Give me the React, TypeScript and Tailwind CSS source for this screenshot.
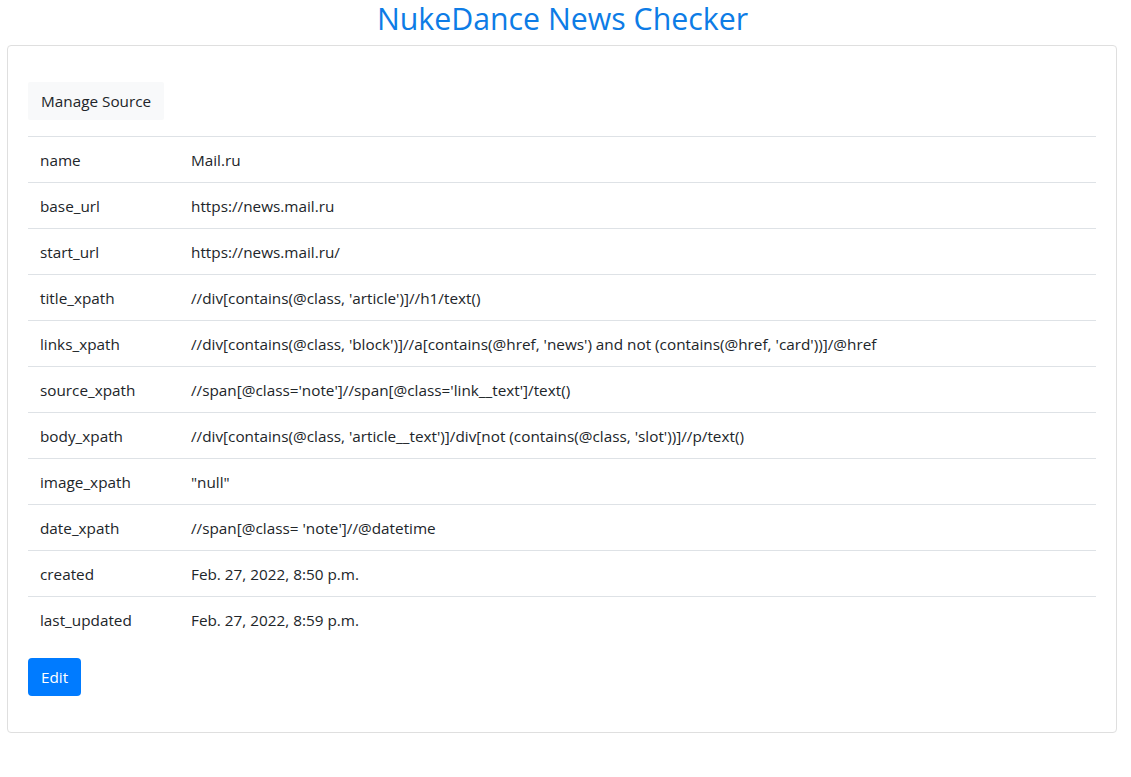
import React from 'react';

type Field = { key: string; value: string };

const fields: Field[] = [
  { key: 'name', value: 'Mail.ru' },
  { key: 'base_url', value: 'https://news.mail.ru' },
  { key: 'start_url', value: 'https://news.mail.ru/' },
  { key: 'title_xpath', value: "//div[contains(@class, 'article')]//h1/text()" },
  { key: 'links_xpath', value: "//div[contains(@class, 'block')]//a[contains(@href, 'news') and not (contains(@href, 'card'))]/@href" },
  { key: 'source_xpath', value: "//span[@class='note']//span[@class='link__text']/text()" },
  { key: 'body_xpath', value: "//div[contains(@class, 'article__text')]/div[not (contains(@class, 'slot'))]//p/text()" },
  { key: 'image_xpath', value: '"null"' },
  { key: 'date_xpath', value: "//span[@class= 'note']//@datetime" },
  { key: 'created', value: 'Feb. 27, 2022, 8:50 p.m.' },
  { key: 'last_updated', value: 'Feb. 27, 2022, 8:59 p.m.' },
];

const App: React.FC = () => {
  return (
    <div className="min-h-screen bg-white text-[#212529] font-['Open_Sans',sans-serif] text-[15.3px] leading-[21px]">
      <div className="px-[7px]">
        {/* Header */}
        <h1 className="text-center text-[30.3px] leading-[38px] text-[#0d7ce6] mb-[7px] pr-[6px]">NukeDance News Checker</h1>

        {/* Card */}
        <div className="border border-[#dfdfdf] rounded-[4px] mr-[7px] p-5">
          <div className="mt-4 flex">
            <button className="bg-[#f8f9fa] px-[13px] h-[38px] rounded-[2px]">Manage Source</button>
          </div>

          {/* Detail table */}
          <table className="w-full mt-4 border-collapse">
            <tbody>
              {fields.map((f) => (
                <tr key={f.key} className="border-t border-[#dee2e6]">
                  <td className="w-[151px] px-3 pt-[13px] pb-[11px]">{f.key}</td>
                  <td className="px-3 pt-[13px] pb-[11px]">{f.value}</td>
                </tr>
              ))}
            </tbody>
          </table>

          <div className="mt-4 mb-4 flex">
            <button className="bg-[#007bff] text-white rounded-[4px] px-[13px] h-[38px]">Edit</button>
          </div>
        </div>
      </div>
    </div>
  );
};

export default App;
